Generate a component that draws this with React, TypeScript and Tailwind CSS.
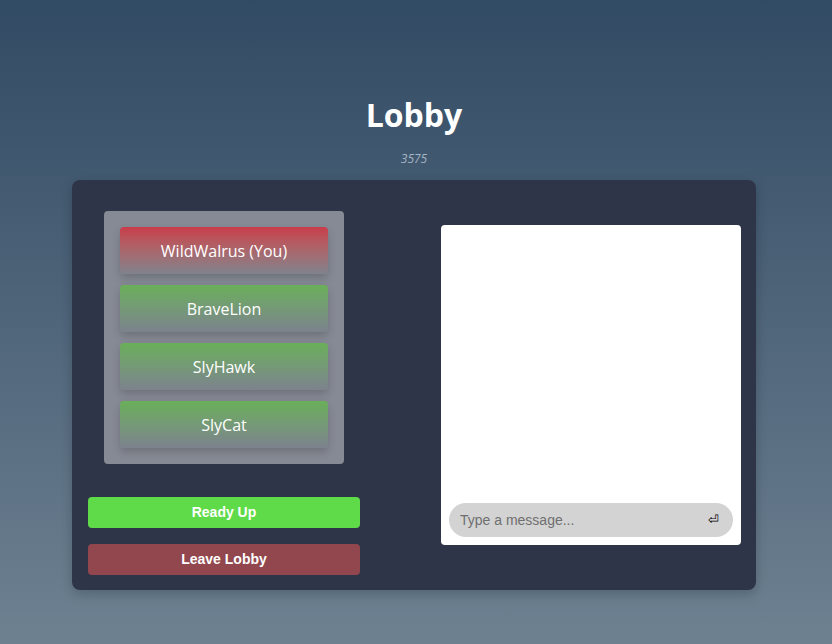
import { useState } from "react"

const players = [
  { name: "WildWalrus (You)", you: true },
  { name: "BraveLion", you: false },
  { name: "SlyHawk", you: false },
  { name: "SlyCat", you: false },
]

function PlayerCard({ name, you }: { name: string; you: boolean }) {
  const tone = you
    ? "bg-gradient-to-b from-[#c83c4a] to-[#7f828c]"
    : "bg-gradient-to-b from-[#6aaf58] to-[#7c828d]"
  return (
    <div
      className={`flex h-[47px] w-[208px] items-center justify-center rounded-[4px] text-[16px] text-white shadow-[0_4px_8px_rgba(0,0,0,0.18)] ${tone}`}
    >
      {name}
    </div>
  )
}

export default function App() {
  const [message, setMessage] = useState("")

  return (
    <div className="flex min-h-[644px] flex-col items-center bg-gradient-to-b from-[#324b64] to-[#6e8191] pr-[4px] font-['Open_Sans','Noto_Sans',sans-serif]">
      <h1 className="mt-[92px] text-[32px] font-bold leading-[46px] text-white">Lobby</h1>
      <p className="mt-[13px] text-[12px] italic leading-[16px] text-[#a7b6c6]">3575</p>

      <div className="mt-[13px] flex h-[410px] w-[684px] items-center justify-between rounded-[8px] bg-[#2f3548] p-[16px] pr-[15px] shadow-[0_4px_12px_rgba(0,0,0,0.2)]">
        <div className="flex h-full w-[272px] flex-col items-center pt-[15px]">
          <div className="flex w-[240px] flex-col items-center gap-[11px] rounded-[4px] bg-[#868a94] py-[16px]">
            {players.map((p) => (
              <PlayerCard key={p.name} name={p.name} you={p.you} />
            ))}
          </div>
          <div className="mt-[33px] flex w-full flex-col gap-[16px] font-['Liberation_Sans',Arial,sans-serif]">
            <button className="h-[31px] w-full rounded-[4px] bg-[#5fdb4a] text-[14px] font-bold text-white">
              Ready Up
            </button>
            <button className="h-[31px] w-full rounded-[4px] bg-[#91474d] text-[14px] font-bold text-white">
              Leave Lobby
            </button>
          </div>
        </div>

        <div className="flex h-[320px] w-[300px] flex-col justify-end rounded-[4px] bg-white p-[8px]">
          <div className="flex h-[34px] items-center rounded-full bg-[#d3d3d3] pl-[11px] pr-[14px] font-['Liberation_Sans',Arial,sans-serif]">
            <input
              value={message}
              onChange={(e) => setMessage(e.target.value)}
              placeholder="Type a message..."
              className="min-w-0 flex-1 bg-transparent text-[14px] text-black outline-none placeholder:text-[#6f6f6f]"
            />
            <span className="text-[13px] text-black">⏎</span>
          </div>
        </div>
      </div>
    </div>
  )
}
